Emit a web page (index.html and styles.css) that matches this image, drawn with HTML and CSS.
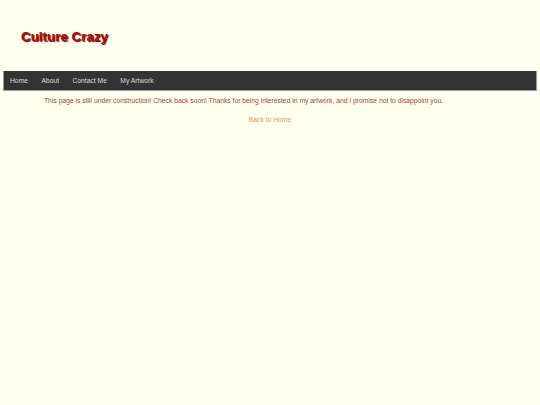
FILE: index.html
```html
<!DOCTYPE html>
<html>
<head>
<meta charset="utf-8">
<title>Culture Crazy</title>
<link rel="stylesheet" href="styles.css">
</head>
<body>
<header class="site-header">
  <h1 class="site-title">Culture Crazy</h1>
</header>
<nav class="main-nav">
  <a href="#">Home</a>
  <a href="#">About</a>
  <a href="#">Contact Me</a>
  <a href="#">My Artwork</a>
</nav>
<main class="content">
  <p class="notice">This page is still under construction! Check back soon! Thanks for being interested in my artwork, and I promise not to disappoint you.</p>
  <p class="back"><a href="#">Back to Home</a></p>
</main>
</body>
</html>
```
FILE: styles.css
```css
html, body {
  margin: 0;
  padding: 0;
  background: #fffff0;
  font-family: "Liberation Sans", Arial, sans-serif;
}
body {
  padding: 0 3px;
}
.site-header {
  height: 71px;
  display: flex;
  align-items: center;
  padding-left: 18px;
  box-sizing: border-box;
}
.site-title {
  margin: 0;
  font-size: 13.4px;
  font-weight: bold;
  color: #c00000;
  text-shadow: 1px 1px 1px #111;
  position: relative;
  top: 1px;
}
.main-nav {
  display: flex;
  height: 19px;
  align-items: center;
  background: #333333;
  border: 1px solid #9a9a9a;
  border-top: none;
}
.main-nav a {
  color: #dcdcdc;
  text-decoration: none;
  font-size: 6.75px;
  padding: 0 6.7px;
}
.main-nav a:first-child {
  padding-left: 6px;
}
.content {
  font-size: 6.75px;
}
.notice {
  margin: 6px 0 0 41px;
  color: #9c4a2e;
}
.back {
  text-align: center;
  margin: 12px 0 0;
}
.back a {
  color: #d49a62;
  text-decoration: none;
}
```
